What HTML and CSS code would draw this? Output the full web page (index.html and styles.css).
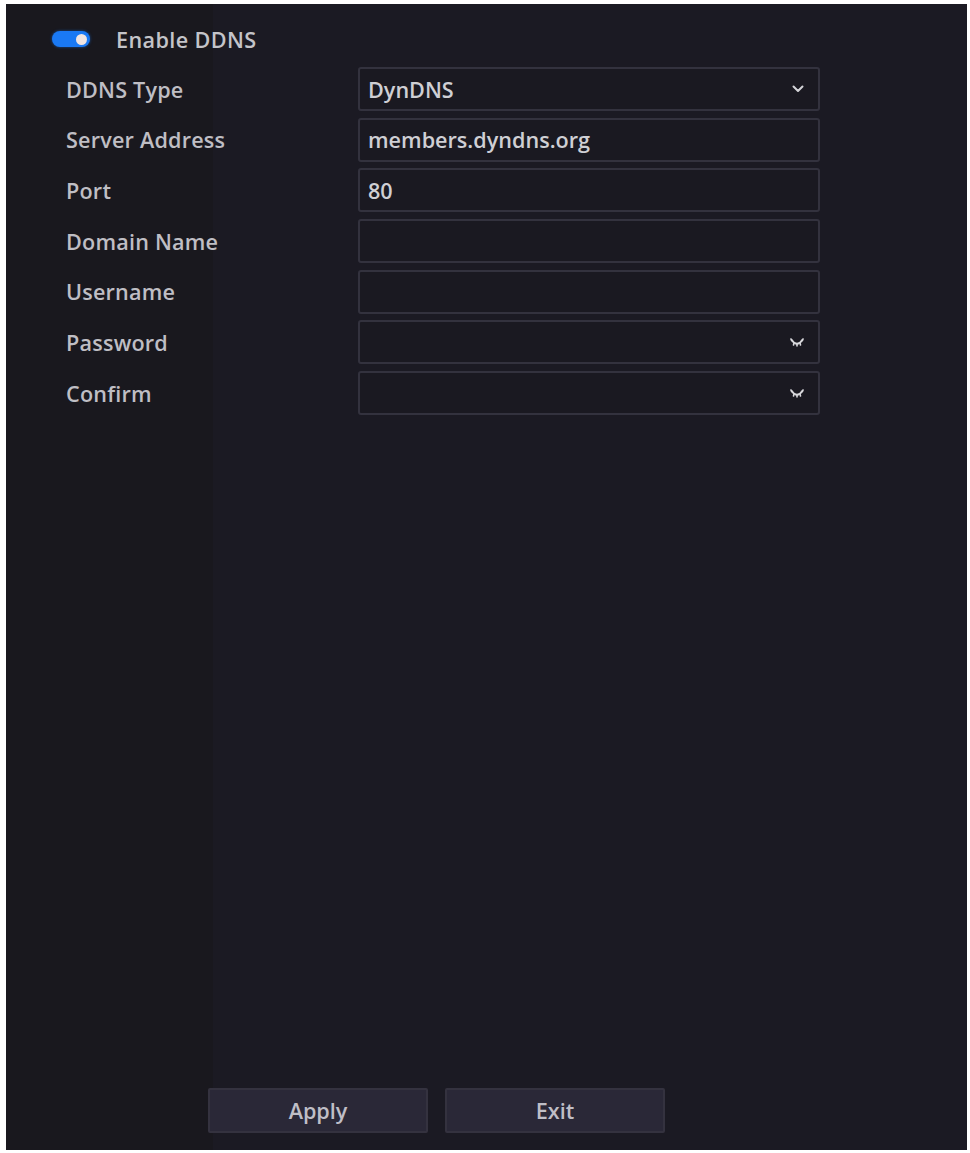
FILE: index.html
```html
<!DOCTYPE html>
<html lang="en">
<head>
<meta charset="utf-8">
<title>DDNS</title>
<link rel="stylesheet" href="styles.css">
</head>
<body>
<div class="frame">
  <div class="toggle-row">
    <span class="toggle"><span class="knob"></span></span>
    <span class="toggle-label">Enable DDNS</span>
  </div>
  <div class="form">
    <div class="row">
      <span class="label">DDNS Type</span>
      <div class="field select">
        <span class="value">DynDNS</span>
        <svg class="icon chevron" width="12" height="8" viewBox="0 0 12 8"><path d="M1.5 1.5 L6 6 L10.5 1.5" fill="none" stroke="#d4d4d8" stroke-width="2" stroke-linecap="round" stroke-linejoin="round"/></svg>
      </div>
    </div>
    <div class="row">
      <span class="label">Server Address</span>
      <div class="field"><span class="value">members.dyndns.org</span></div>
    </div>
    <div class="row">
      <span class="label">Port</span>
      <div class="field"><span class="value">80</span></div>
    </div>
    <div class="row">
      <span class="label">Domain Name</span>
      <div class="field"></div>
    </div>
    <div class="row">
      <span class="label">Username</span>
      <div class="field"></div>
    </div>
    <div class="row">
      <span class="label">Password</span>
      <div class="field">
        <svg class="icon eye" width="14" height="9" viewBox="0 0 14 9"><path d="M1.5 2 Q7 9.5 12.5 2" fill="none" stroke="#d8d8dc" stroke-width="2" stroke-linecap="round"/><path d="M1 1 L2.5 3 M4 5 L3.5 7 M7 6 L7 8 M10 5 L10.5 7 M13 1 L11.5 3" stroke="#d8d8dc" stroke-width="1.6" stroke-linecap="round"/></svg>
      </div>
    </div>
    <div class="row">
      <span class="label">Confirm</span>
      <div class="field">
        <svg class="icon eye" width="14" height="9" viewBox="0 0 14 9"><path d="M1.5 2 Q7 9.5 12.5 2" fill="none" stroke="#d8d8dc" stroke-width="2" stroke-linecap="round"/><path d="M1 1 L2.5 3 M4 5 L3.5 7 M7 6 L7 8 M10 5 L10.5 7 M13 1 L11.5 3" stroke="#d8d8dc" stroke-width="1.6" stroke-linecap="round"/></svg>
      </div>
    </div>
  </div>
  <div class="buttons">
    <button class="btn">Apply</button>
    <button class="btn">Exit</button>
  </div>
</div>
</body>
</html>
```
FILE: styles.css
```css
html, body {
  margin: 0;
  padding: 0;
  background: #ffffff;
}
body {
  font-family: "Open Sans", "Noto Sans", sans-serif;
}
.frame {
  margin: 4px 0 0 6px;
  width: 961px;
  height: 1146px;
  box-sizing: border-box;
  background: linear-gradient(to right, #19181e 0, #19181e 207px, #1b1a23 207px, #1b1a23 100%);
  display: flex;
  flex-direction: column;
  padding: 23px 0 17px 46px;
}
.toggle-row {
  display: flex;
  align-items: center;
  height: 24px;
}
.toggle {
  position: relative;
  width: 38px;
  height: 16px;
  border-radius: 8px;
  background: #1a79f4;
  box-shadow: 0 0 3px rgba(26, 121, 244, 0.6);
}
.knob {
  position: absolute;
  right: 3px;
  top: 2.5px;
  width: 11px;
  height: 11px;
  border-radius: 50%;
  background: #f1e5e2;
}
.toggle-label {
  margin-left: 26px;
  font-size: 21.6px;
  font-weight: 600;
  color: #c4c4c9;
  letter-spacing: 0.4px;
}
.form {
  margin-top: 16px;
  display: flex;
  flex-direction: column;
  gap: 6.7px;
  padding-left: 14px;
}
.row {
  display: flex;
  align-items: center;
  height: 44px;
}
.label {
  width: 292px;
  font-size: 21.6px;
  font-weight: 600;
  color: #bfbec4;
  letter-spacing: 0.2px;
}
.field {
  width: 462px;
  height: 44px;
  box-sizing: border-box;
  border: 2px solid #33323e;
  border-radius: 3px;
  background: #1a1921;
  display: flex;
  align-items: center;
  padding: 0 14px 0 8px;
}
.value {
  flex: 1;
  font-size: 21.6px;
  font-weight: 600;
  color: #cfcfd4;
  letter-spacing: 0;
}
.icon {
  margin-left: auto;
  display: block;
}
.buttons {
  margin-top: auto;
  display: flex;
  gap: 17px;
  padding-left: 156px;
}
.btn {
  width: 220px;
  height: 45px;
  border: 2px solid #34323f;
  border-radius: 2px;
  background: #2a2837;
  color: #bfbec6;
  font-family: "Open Sans", "Noto Sans", sans-serif;
  font-size: 21.6px;
  font-weight: 600;
  padding: 0;
}
```
